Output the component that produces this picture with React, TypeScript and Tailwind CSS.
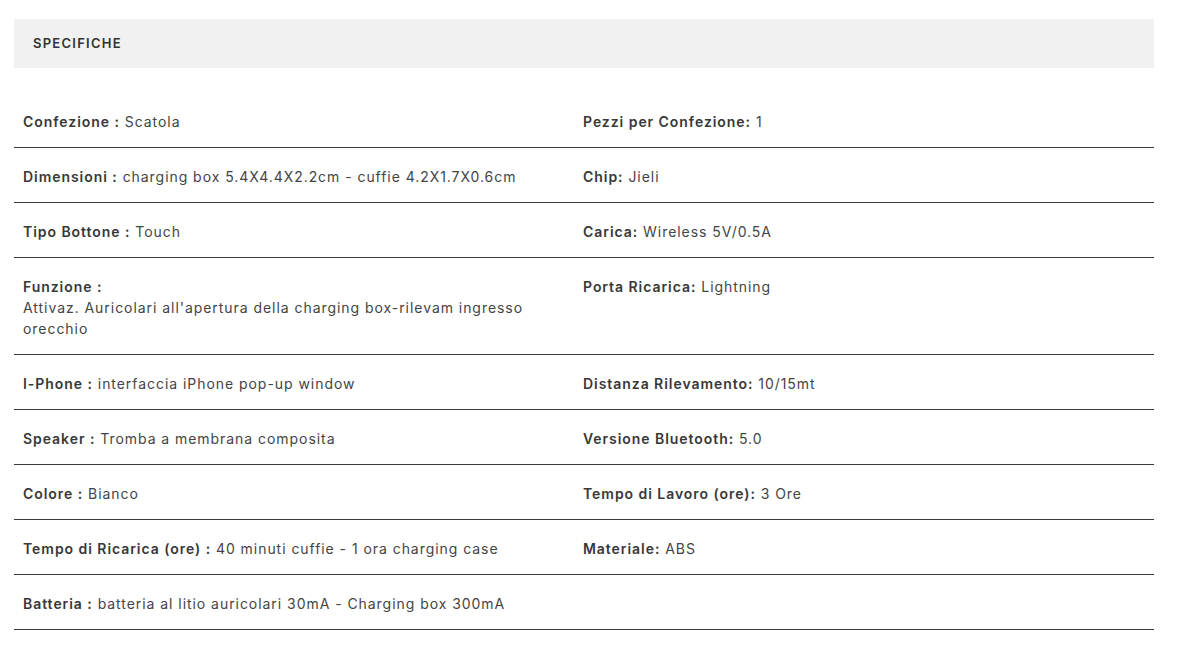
import React from "react";

type Cell = { label: string; value: string; breakAfter?: boolean } | null;

const rows: [Cell, Cell][] = [
  [{ label: "Confezione :", value: "Scatola" }, { label: "Pezzi per Confezione:", value: "1" }],
  [
    { label: "Dimensioni :", value: "charging box 5.4X4.4X2.2cm - cuffie 4.2X1.7X0.6cm" },
    { label: "Chip:", value: "Jieli" },
  ],
  [{ label: "Tipo Bottone :", value: "Touch" }, { label: "Carica:", value: "Wireless 5V/0.5A" }],
  [
    {
      label: "Funzione :",
      value: "Attivaz. Auricolari all'apertura della charging box-rilevam ingresso orecchio",
      breakAfter: true,
    },
    { label: "Porta Ricarica:", value: "Lightning" },
  ],
  [
    { label: "I-Phone :", value: "interfaccia iPhone pop-up window" },
    { label: "Distanza Rilevamento:", value: "10/15mt" },
  ],
  [
    { label: "Speaker :", value: "Tromba a membrana composita" },
    { label: "Versione Bluetooth:", value: "5.0" },
  ],
  [{ label: "Colore :", value: "Bianco" }, { label: "Tempo di Lavoro (ore):", value: "3 Ore" }],
  [
    { label: "Tempo di Ricarica (ore) :", value: "40 minuti cuffie - 1 ora charging case" },
    { label: "Materiale:", value: "ABS" },
  ],
  [{ label: "Batteria :", value: "batteria al litio auricolari 30mA - Charging box 300mA" }, null],
];

function CellView({ cell }: { cell: Cell }) {
  if (!cell) return <div className="px-[9px] pt-[18px] pb-[15px]" />;
  return (
    <div className="px-[9px] pt-[18px] pb-[15px] text-[14px] leading-[21px] tracking-[0.95px] text-[#444]">
      <span className="font-semibold text-[#383838]">{cell.label}</span>
      {cell.breakAfter ? <br /> : " "}
      <span>{cell.value}</span>
    </div>
  );
}

export default function App() {
  return (
    <div
      className="min-h-[651px] bg-white pt-[19px] pl-[14px] pr-[25px]"
      style={{ fontFamily: "Inter, 'Noto Sans', sans-serif" }}
    >
      <div className="w-[1140px]">
        <div className="h-[49px] bg-[#f1f1f1] flex items-center pl-[19px]">
          <span className="text-[13px] font-semibold tracking-[1.25px] text-[#333]">SPECIFICHE</span>
        </div>
        <div className="mt-[25px]">
          {rows.map((r, i) => (
            <div key={i} className="grid grid-cols-[560px_1fr] border-b border-[#3a3a3a]">
              <CellView cell={r[0]} />
              <CellView cell={r[1]} />
            </div>
          ))}
        </div>
      </div>
    </div>
  );
}
